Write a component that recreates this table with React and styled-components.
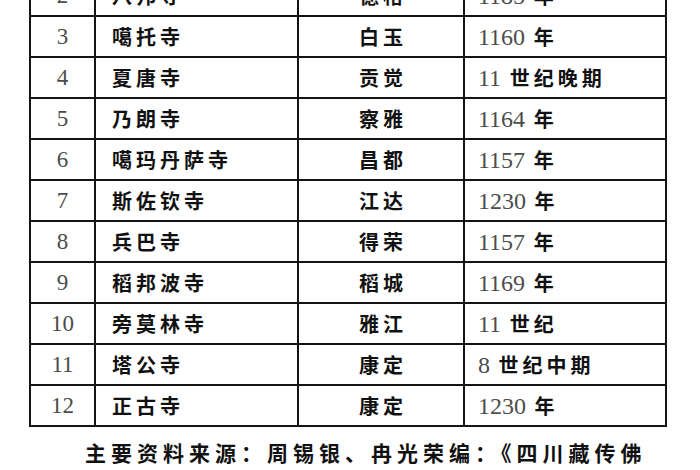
import styled, { createGlobalStyle } from "styled-components";

const GlobalStyle = createGlobalStyle`
	html, body {
		margin: 0;
		padding: 0;
		background: #ffffff;
	}
	body {
		width: 700px;
		height: 470px;
		overflow: hidden;
	}
`;

const temples = [
	{ n: 2, name: "八邦寺", place: "德格", year: "1185", unit: "年" },
	{ n: 3, name: "噶托寺", place: "白玉", year: "1160", unit: "年" },
	{ n: 4, name: "夏唐寺", place: "贡觉", year: "11", unit: "世纪晚期" },
	{ n: 5, name: "乃朗寺", place: "察雅", year: "1164", unit: "年" },
	{ n: 6, name: "噶玛丹萨寺", place: "昌都", year: "1157", unit: "年" },
	{ n: 7, name: "斯佐钦寺", place: "江达", year: "1230", unit: "年" },
	{ n: 8, name: "兵巴寺", place: "得荣", year: "1157", unit: "年" },
	{ n: 9, name: "稻邦波寺", place: "稻城", year: "1169", unit: "年" },
	{ n: 10, name: "旁莫林寺", place: "雅江", year: "11", unit: "世纪" },
	{ n: 11, name: "塔公寺", place: "康定", year: "8", unit: "世纪中期" },
	{ n: 12, name: "正古寺", place: "康定", year: "1230", unit: "年" },
];

export default function App() {
	return (
		<Pagina>
			<GlobalStyle />
			<Tabela>
				<colgroup>
					<col style={{ width: 65 }} />
					<col style={{ width: 203 }} />
					<col style={{ width: 166 }} />
					<col style={{ width: 202 }} />
				</colgroup>
				<tbody>
					{temples.map((t) => (
						<Linha key={t.n}>
							<Numero>{t.n}</Numero>
							<Nome>{t.name}</Nome>
							<Local>{t.place}</Local>
							<Data>
								<Algarismos>{t.year}</Algarismos> {t.unit}
							</Data>
						</Linha>
					))}
				</tbody>
			</Tabela>
			<Fonte>主要资料来源：周锡银、冉光荣编：《四川藏传佛</Fonte>
		</Pagina>
	);
}

const Pagina = styled.div`
	padding-left: 29px;
	margin-top: -26px;
`;

const Tabela = styled.table`
	border-collapse: collapse;
	table-layout: fixed;
	width: 636px;
	border: 2px solid #141414;
`;

const Linha = styled.tr`
	height: 41px;
`;

const Celula = styled.td`
	border: 2px solid #141414;
	padding: 0;
	vertical-align: middle;
	font-family: "Noto Sans CJK SC", "Noto Sans", sans-serif;
	font-size: 20px;
	font-weight: 600;
	letter-spacing: 4px;
	color: #111111;
	line-height: 24px;
	white-space: nowrap;
`;

const Numero = styled(Celula)`
	text-align: center;
	font-family: "Liberation Serif", serif;
	font-weight: 400;
	font-size: 23px;
	letter-spacing: 0;
	color: #4c4c4c;
`;

const Nome = styled(Celula)`
	padding-left: 16px;
`;

const Local = styled(Celula)`
	text-align: center;
	padding-left: 4px;
`;

const Data = styled(Celula)`
	padding-left: 13px;
`;

const Algarismos = styled.span`
	font-family: "Liberation Serif", serif;
	font-weight: 400;
	font-size: 24px;
	letter-spacing: 0;
	color: #4c4c4c;
`;

const Fonte = styled.p`
	margin: 13px 0 0;
	padding-left: 56px;
	font-family: "Noto Sans CJK SC", "Noto Sans", sans-serif;
	font-size: 21px;
	font-weight: 600;
	letter-spacing: 5px;
	color: #111111;
	line-height: 24px;
	white-space: nowrap;
`;
